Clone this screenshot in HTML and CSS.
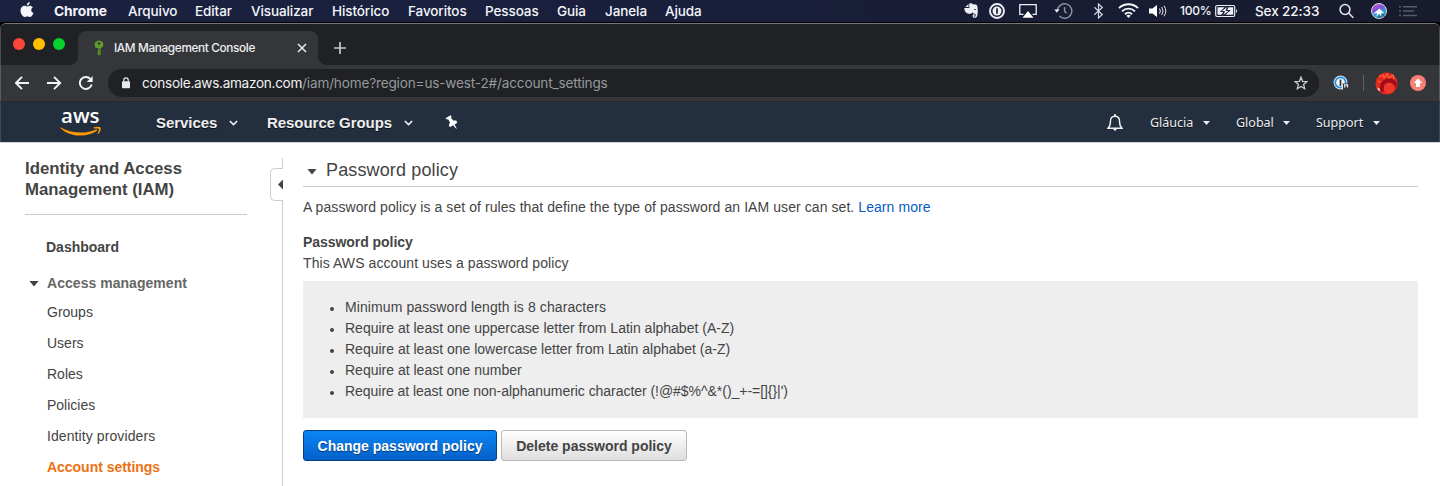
FILE: index.html
```html
<!DOCTYPE html>
<html lang="pt-BR">
<head>
<meta charset="utf-8">
<title>IAM Management Console</title>
<link rel="stylesheet" href="styles.css">
</head>
<body>
<div class="menubar">
  <svg class="apple" width="14" height="16" viewBox="0 0 14 16"><path fill="#f4f6fb" d="M9.800 0c.1 1.900-1.300 3.500-3 3.500C6.600 1.700 8 .2 9.800 0zM6.900 4.500c.6 0 1.600-.8 3-.8 1 0 2.200.5 3 1.600-2.500 1.500-2.100 4.700.6 5.800-.6 1.700-2 4-3.300 4-1 0-1.500-.6-2.800-.6s-1.900.6-2.800.6C3 15.100.5 12 .5 8.600c0-3 1.900-4.800 4-4.800 1.100 0 1.900.7 2.400.7z"/></svg>
  <nav class="menus">
    <b>Chrome</b><span>Arquivo</span><span>Editar</span><span>Visualizar</span><span>Histórico</span><span>Favoritos</span><span>Pessoas</span><span>Guia</span><span>Janela</span><span>Ajuda</span>
  </nav>
  <div class="status">
    <svg width="16" height="16" viewBox="0 0 16 16"><path fill="#eef0f6" d="M4.500.9v3H1.300zM5.300.5c2-.4 2.900.2 3.300.8 2.200.1 4.200.3 4.600 1.500.8 3 .8 8.600-.2 10.800-.7 1.500-4.200 1.900-4.400-.4-.1-1.500.7-2.100 2.200-1.900v1.300c-.8-.1-1.100.1-1 .7.200.7 1.500.5 1.700-.4l.1-1.800c-1.600-.2-2.700-.9-3.100-1.800-.8 1.500-1.800 1.700-3.600 1.400C2 10.300.3 8.300.3 4.900h5z"/><path d="M10 7q.3-1.300 1.600-.9l.2 1z" fill="#1a1f35"/></svg>
    <svg width="16" height="16" viewBox="0 0 16 16" fill="none" stroke="#eef0f6"><circle cx="8" cy="8" r="7" stroke-width="1.900"/><circle cx="8" cy="8" r="4.500" fill="#eef0f6" stroke="none"/><path d="M8 5.200v5.600" stroke="#1a1f35" stroke-width="1.700"/></svg>
    <svg width="18" height="16" viewBox="0 0 18 16"><path d="M4.500 11.300H.8V1.700h16.400v9.600h-3.700" fill="none" stroke="#eef0f6" stroke-width="1.300"/><path fill="#fff" d="M9 8l5.500 6.800h-11z"/></svg>
    <svg width="19" height="16" viewBox="0 0 19 16" fill="none" stroke="#8a8fa3" stroke-width="1.500"><path d="M3.400 7.500A7.200 7.200 0 1 1 5.400 13M10.600 4v4.400l2 1.800"/><path d="M.3 6.500l5.200-.2-2.600 3.500z" fill="#eef0f6" stroke="none"/></svg>
    <svg width="10" height="16" viewBox="0 0 10 16" fill="none" stroke="#d9dce6" stroke-width="1.200"><path d="M.3 4.300l8 7.200L4.500 15V1l3.800 3.500-8 7.200"/></svg>
    <svg width="21" height="16" viewBox="0 0 21 16" fill="none" stroke="#f4f6fb" stroke-width="1.900"><path d="M1 5.200a13.500 13.500 0 0 1 19 0M4 8.300a9.200 9.200 0 0 1 13 0M7 11.200a5 5 0 0 1 7 0"/><path d="M8.400 12.800L10.500 15l2.100-2.200a3 3 0 0 0-4.200 0z" fill="#f4f6fb" stroke="none"/></svg>
    <svg width="18" height="16" viewBox="0 0 18 16" fill="none" stroke="#e8eaf1"><path d="M0 5.500h3.500L8 2v12L3.500 10.500H0z" fill="#fff" stroke="none"/><path d="M10.500 5.500q1.800 2.500 0 5M12.700 4q2.800 4 0 8M15 2.700q3.600 5.300 0 10.600"/></svg>
    <span class="percent">100%</span>
    <svg width="24" height="16" viewBox="0 0 24 16"><rect x=".7" y="2.500" width="19" height="11" rx="1.500" fill="none" stroke="#eef0f6" stroke-width="1.200"/><path fill="#eef0f6" d="M2.500 4.300h7.200l-4.300 4.400h3l-2 3H2.500zM13.500 4.300h4.700v7.400H10.500l5-4.700h-3.300zM21 6q2 2 0 4z"/><path d="M13 3L5.500 8.500h4L7.500 13 15 7.500h-4z" fill="#eef0f6" stroke="#1a1f35" stroke-width=".9"/></svg>
    <span class="clock">Sex 22:33</span>
    <svg width="15" height="16" viewBox="0 0 15 16" fill="none" stroke="#e8eaf1" stroke-width="1.500"><circle cx="6" cy="6.500" r="4.900"/><path d="M9.500 10l4.800 4.800"/></svg>
    <svg width="16" height="16" viewBox="0 0 16 16"><defs><linearGradient id="siri" x1=".2" y1="0" x2=".7" y2="1"><stop offset="0" stop-color="#d64fd0"/><stop offset=".4" stop-color="#7b55d8"/><stop offset=".7" stop-color="#1ea9d8"/><stop offset="1" stop-color="#0b345a"/></linearGradient></defs><circle cx="8" cy="8" r="7.500" fill="url(#siri)" stroke="#d7dbe8"/><path d="M8.500 5.500l5 5-3.500-.5.500 4-2.500-3.500L5.500 14 6 10l-4 1z" fill="#fff"/></svg>
    <svg width="18" height="16" viewBox="0 0 18 16" fill="none" stroke="#565b70" stroke-width="1.500"><path d="M0 3.700h2M4 3.700h14M0 8h2M4 8h11M0 12.400h2M4 12.400h14"/></svg>
  </div>
</div>

<div class="window">
  <div class="tabstrip">
    <div class="lights"><i class="red"></i><i class="yellow"></i><i class="green"></i></div>
    <div class="tab">
      <svg width="10" height="16" viewBox="0 0 10 16"><path fill="#5e9b2f" d="M5 .5l2 .5 2 1.500.5 2.500L8.500 7 6.800 8.300v5.900L5 15.500l-1.200-1-.3-1.200.8-.8-1-1.200 1-.9V8.300L1.300 7.500.5 5 1 2.500 3 1z"/><circle cx="5" cy="3.500" r="1.200" fill="#35363a"/><path d="M5.800 8v6.500" stroke="#356a1c" stroke-width="1"/></svg>
      <span>IAM Management Console</span>
      <svg width="10" height="10" viewBox="0 0 10 10" stroke="#e8eaed" stroke-width="1.500"><path d="M1 1l8 8M9 1L1 9"/></svg>
    </div>
    <svg class="plus" width="12" height="12" viewBox="0 0 12 12" stroke="#c4c7cb" stroke-width="1.700"><path d="M6 0v12M0 6h12"/></svg>
  </div>
  <div class="toolbar">
    <svg width="15" height="14" viewBox="0 0 15 14" fill="none" stroke="#f1f3f4" stroke-width="1.900"><path d="M14 7H1.200M7 .8L.9 7 7 13.200"/></svg>
    <svg width="15" height="14" viewBox="0 0 15 14" fill="none" stroke="#f1f3f4" stroke-width="1.900"><path d="M0 7h13M7 .8L13.200 7 7 13.200"/></svg>
    <svg width="15" height="14" viewBox="0 0 15 14" fill="none" stroke="#f1f3f4" stroke-width="1.900"><path d="M12.700 8.500A6 6 0 1 1 11.300 2.900"/><path d="M13.700 0v6H7.700z" fill="#f1f3f4" stroke="none"/></svg>
    <div class="omnibox">
      <svg width="10" height="12" viewBox="0 0 10 12"><rect x="1" y="4.300" width="8" height="7" rx=".8" fill="#e8eaed"/><path d="M2.800 4.500V3a2.200 2.200 0 0 1 4.400 0v1.500" fill="none" stroke="#e8eaed" stroke-width="1.200"/></svg>
      <span class="url">console.aws.amazon.com<em>/iam/home?region=us-west-2#/account_settings</em></span>
      <svg width="14" height="14" viewBox="0 0 14 14" fill="none" stroke="#c9cbcf" stroke-width="1.300"><path d="M7 1.200l1.600 4.100 4.400.3-3.400 2.800 1.100 4.300L7 10.400l-3.700 2.300 1.100-4.300L1 5.600l4.400-.3z"/></svg>
    </div>
    <svg class="onepass" width="16" height="16" viewBox="0 0 16 16"><circle cx="7.500" cy="7.500" r="6.200" fill="#f1f6fb" stroke="#d5e5f3" stroke-width="1.500"/><circle cx="7.500" cy="7.500" r="5.200" fill="none" stroke="#278de0" stroke-width="1.700"/><path d="M7.500 4.500V11" stroke="#26323d" stroke-width="1.700"/><path d="M9 8.500h7V16H9z" fill="#35363a"/><path d="M9.300 8.500v6M11.700 12.500V9.800h2.800v2.700" fill="none" stroke="#e6eaee" stroke-width="1.300"/></svg>
    <i class="divider"></i>
    <svg class="avatar" width="23" height="23" viewBox="0 0 23 23"><circle cx="11.500" cy="11.500" r="11" fill="#df2b1e"/><path d="M4 5l4-2 1 3 3-4 2 4 4-3 1 4M3 9l3 1" fill="none" stroke="#ff6541" stroke-width="1.200"/><path d="M5.500 20C3 12 8 6.500 14 6.500c4 0 7 2 8 5l-1 5c-2-5-5-6-7-6-4 0-6 3-5 9z" fill="#a00c1a"/><circle cx="14" cy="16" r="5.200" fill="#f0392b"/><path d="M2 15.500l2.500 1 .8 2.500-1.800-.5z" fill="#f6d6d0"/></svg>
    <svg class="update" width="16" height="16" viewBox="0 0 16 16"><circle cx="8" cy="8" r="8" fill="#f98074"/><path d="M8 3.500l4.200 4.500H10v4H6V8H3.800z" fill="#fff"/></svg>
  </div>

  <header class="awsnav">
    <div class="logo"><span>aws</span><svg width="42" height="11" viewBox="0 0 42 11"><path d="M.5 1.200C10 7.500 26 8.500 36.500 3.200l.8 1.300C27 12 10 11.300.3 1.900z" fill="#f90"/><path d="M33.500 1.600c2-1 5-1.300 7-.4.6 2-.3 5-2.200 6.700l-.7-.4c.8-1.700 1.500-3.800 1.200-4.800-1.500-.5-3.500-.3-5.100-.1z" fill="#f90"/></svg></div>
    <span class="main services">Services</span><svg class="chev" width="9" height="6" viewBox="0 0 9 6"><path d="M.8 1l3.700 3.500L8.200 1" fill="none" stroke="#eee" stroke-width="1.700"/></svg>
    <span class="main groups">Resource Groups</span><svg class="chev" width="9" height="6" viewBox="0 0 9 6"><path d="M.8 1l3.700 3.500L8.200 1" fill="none" stroke="#eee" stroke-width="1.700"/></svg>
    <svg class="pin" width="14" height="15" viewBox="0 0 14 15"><path fill="#fff" d="M.5 3.200L5.600.2l1 1.500-.6 1.300 2.400 2.600 2.900-.1 1 2.200-2.600 1.700 2 4.100-.5.300-3.100-3.500-3.200 2-1.100-2.300 1.200-2.500-1.700-3.100-1.800-.1z"/></svg>
    <svg class="bell" width="16" height="17" viewBox="0 0 16 17"><path d="M1 14.200c1.800-1.500 2.400-3 2.400-6.500 0-3.500 1.600-5.500 4.600-5.500s4.600 2 4.600 5.500c0 3.500.6 5 2.400 6.500z" fill="none" stroke="#eee" stroke-width="1.400"/><path d="M7 .3h2v2H7zM5.500 14.500h5L8 17z" fill="#eee"/></svg>
    <span class="sub user">Gláucia</span><i class="caret"></i>
    <span class="sub region">Global</span><i class="caret"></i>
    <span class="sub support">Support</span><i class="caret"></i>
  </header>

  <div class="page">
    <aside class="sidebar">
      <h1>Identity and Access<br>Management (IAM)</h1>
      <ul class="nav">
        <li class="dash">Dashboard</li>
        <li class="group">Access management</li>
        <li>Groups</li><li>Users</li><li>Roles</li><li>Policies</li><li class="idp">Identity providers</li>
        <li class="active">Account settings</li>
      </ul>
    </aside>
    <div class="splitter"><i class="line top"></i><div class="handle"><i></i></div><i class="line rest"></i></div>
    <main class="content">
      <h2><span>Password policy</span></h2>
      <p class="intro">A password policy is a set of rules that define the type of password an IAM user can set. <a>Learn more</a></p>
      <h3>Password policy</h3>
      <p class="uses">This AWS account uses a password policy</p>
      <ul class="rules">
        <li class="length">Minimum password length is 8 characters</li>
        <li>Require at least one uppercase letter from Latin alphabet (A-Z)</li>
        <li>Require at least one lowercase letter from Latin alphabet (a-Z)</li>
        <li>Require at least one number</li>
        <li class="symbols">Require at least one non-alphanumeric character (!@#$%^&amp;*()_+-=[]{}|')</li>
      </ul>
      <div class="actions"><button class="primary">Change password policy</button><button class="plain">Delete password policy</button></div>
    </main>
  </div>
</div>
</body>
</html>
```
FILE: styles.css
```css
* { box-sizing: border-box; }
body { margin: 0; width: 1440px; height: 486px; overflow: hidden; background: #000; font-family: "Liberation Sans", Arial, sans-serif; font-size: 14px; color: #444; }
svg { display: block; flex: none; }
ul { list-style: none; margin: 0; padding: 0; }

/* system menu bar */
.menubar { display: flex; height: 23px; background: linear-gradient(90deg, #1a2240, #191e3b 50%, #181b2c); border-bottom: 1px solid #000; font-family: Inter, sans-serif; color: #f4f6fb; line-height: 22px; white-space: nowrap; }
.apple { margin: 2px 0 0 20px; }
.menus { display: grid; grid-template-columns: 74px 67px 56px 81px 76px 77px 72px 48px 60px 59px; margin-left: 20px; width: 670px; font-size: 13.500px; font-weight: 500; letter-spacing: -.1px; }
.menus b { font-weight: 700; font-size: 13.800px; }
.status { display: grid; grid-template-columns: 25px 30px 35px 40px 24px 31px 31px 35px 40px 84px 32px 28px 18px; align-items: center; margin-left: 240px; height: 22px; }
.percent { font-size: 12px; font-weight: 500; letter-spacing: -.2px; }
.clock { font-size: 13.500px; font-weight: 500; letter-spacing: -.1px; }

/* browser frame */
.window { height: 463px; background: #202124; border-top: 1px solid #77777a; border-radius: 6px 6px 0 0; overflow: hidden; }
.tabstrip { display: flex; height: 41px; box-shadow: inset 1px 0 #4a4b4e, inset -1px 0 #4a4b4e; font-family: Inter, sans-serif; }
.lights { display: flex; gap: 8px; width: 78px; padding: 14px 0 0 13px; background: radial-gradient(circle at 0 0, transparent 7.500px, #35363a 8px) right bottom / 8px 8px no-repeat; background-image: radial-gradient(circle at 0 0, transparent 7.500px, #35363a 8px); }
.lights i { width: 12px; height: 12px; border-radius: 50%; }
.red { background: #ff453a; }
.yellow { background: #ffbf00; }
.green { background: #06d12d; }
.tab { display: flex; align-items: center; width: 240px; height: 34px; margin-top: 7px; padding: 0 11px 0 16px; background: #35363a; border-radius: 8px 8px 0 0; font-size: 12px; color: #eceef0; }
.tab span { flex: 1; margin-left: 10px; font-size: 11.800px; font-weight: 500; letter-spacing: -.36px; white-space: nowrap; }
.tab::after { content: ""; align-self: flex-end; width: 8px; height: 8px; margin-right: -19px; margin-left: 11px; background: radial-gradient(circle at 100% 0, transparent 7.500px, #35363a 8px); }
.plus { margin: 18px 0 0 16px; }
.toolbar { display: flex; align-items: center; height: 36px; padding-left: 15px; background: #35363a; box-shadow: inset 1px 0 #5b5c60, inset -1px 0 #5b5c60; }
.toolbar > svg + svg { margin-left: 17px; }
.omnibox { display: flex; align-items: center; width: 1211px; height: 28px; margin-left: 14px; padding: 0 11px 0 13px; border-radius: 14px; background: #202124; font-family: Inter, sans-serif; font-size: 13.600px; letter-spacing: -.22px; color: #f1f3f4; }
.url { flex: 1; margin-left: 11px; letter-spacing: -.3px; white-space: nowrap; }
.url em { font-style: normal; letter-spacing: -.17px; color: #96999d; }
.onepass { margin-left: 14px; }
.divider { width: 1px; height: 16px; margin-left: 14px; background: #5f6165; }
.avatar { margin-left: 11px; }
.toolbar > .update { margin-left: 12px; }

/* console navigation */
.awsnav { display: flex; align-items: center; height: 41px; padding-left: 60px; background: #232f3e; color: #eee; border-top: 1px solid #26292e; box-shadow: inset 1px 0 #3f4a58, inset -1px 0 #3f4a58; text-shadow: 0 1px 0 #0a0f16; white-space: nowrap; }
.logo { width: 42px; height: 28px; }
.logo span { display: block; height: 18px; padding-left: 1px; font: 600 20.500px/14px "Open Sans", sans-serif; color: #fff; text-shadow: none; }
.main { font-size: 15px; font-weight: 700; padding-top: 1px; letter-spacing: -.05px; }
.services { width: 73px; margin-left: 54px; }
.groups { width: 137px; margin-left: 29px; }
.chev { margin-top: 2px; }
.pin { margin-left: 32px; }
.bell { margin: 1px 0 0 648px; }
.sub { padding-top: 1px; font-family: "Noto Sans", sans-serif; font-size: 12.500px; }
.user { width: 53px; margin-left: 27px; }
.region { width: 47px; margin-left: 26px; }
.support { width: 57px; margin-left: 26px; }
.caret { width: 7px; height: 4px; margin-top: 2px; background: #eee; clip-path: polygon(0 0, 100% 0, 50% 100%); }

/* page */
.page { display: flex; height: 344px; background: #fff; border-top: 1px solid #d4d7d9; }
.sidebar { width: 247px; padding: 15px 0 0 25px; }
h1 { margin: 0; height: 57px; border-bottom: 1px solid #ccc; font-size: 16.800px; line-height: 21px; color: #444; white-space: nowrap; }
.nav { padding: 17px 0 0 22px; line-height: 31px; white-space: nowrap; }
.nav .dash { margin-left: -1px; height: 36px; font-weight: 700; }
.nav .group { display: flex; align-items: center; height: 29px; margin-left: -18px; line-height: 30px; font-weight: 700; color: #666; letter-spacing: .04px; }
.nav .group::before { content: ""; width: 10px; height: 6px; margin: 2px 8px 0 0; background: #444; clip-path: polygon(0 0, 100% 0, 50% 100%); }
.nav .idp { letter-spacing: .09px; }
.nav .active { font-weight: 700; color: #ec7211; letter-spacing: -.03px; }
.splitter { display: flex; flex-direction: column; align-items: flex-end; width: 36px; padding-top: 15px; }
.line { width: 1px; background: #ccc; }
.top { height: 10px; }
.rest { flex: 1; }
.handle { display: flex; align-items: center; justify-content: flex-end; width: 13px; height: 33px; border: 1px solid #ccc; border-right: 0; border-radius: 5px 0 0 5px; }
.handle i { width: 5px; height: 10px; background: #444; clip-path: polygon(100% 0, 100% 100%, 0 50%); }
.content { width: 1135px; padding: 14px 0 0 20px; }
h2 { display: flex; align-items: center; height: 30px; margin: 0; padding-bottom: 2px; border-bottom: 1px solid #ccc; font-size: 18px; font-weight: 400; letter-spacing: .14px; }
h2::before { content: ""; width: 10px; height: 6px; margin: 2px 9px 0 4px; background: #444; clip-path: polygon(0 0, 100% 0, 50% 100%); }
.content p { margin: 0; line-height: 21px; white-space: nowrap; }
.content .intro { margin-top: 10px; letter-spacing: .074px; }
.content .uses { letter-spacing: .08px; }
a { color: #0a5cc2; }
h3 { margin: 14px 0 0; font-size: 14px; line-height: 21px; letter-spacing: -.05px; }
.rules { height: 137px; margin-top: 7px; padding: 16px 0 0 27px; background: #eee; line-height: 21px; }
.rules li { display: flex; align-items: center; white-space: pre; }
.rules li::before { content: ""; width: 4px; height: 4px; margin: 2px 11px 0 0; border-radius: 50%; background: #444; }
.rules .length { letter-spacing: .09px; }
.rules .symbols { letter-spacing: -.04px; }
.actions { display: flex; gap: 4px; margin-top: 12px; }
button { height: 31px; padding: 0; border-radius: 3px; font: 700 14px "Liberation Sans", Arial, sans-serif; white-space: nowrap; }
.primary { width: 194px; border: 1px solid #05417f; background: linear-gradient(#0a86f4, #0560c8); color: #fff; text-shadow: 0 1px 1px #003a78; }
.plain { width: 186px; border: 1px solid #b8b8b8; background: linear-gradient(#fff, #dedede); color: #444; }
```
